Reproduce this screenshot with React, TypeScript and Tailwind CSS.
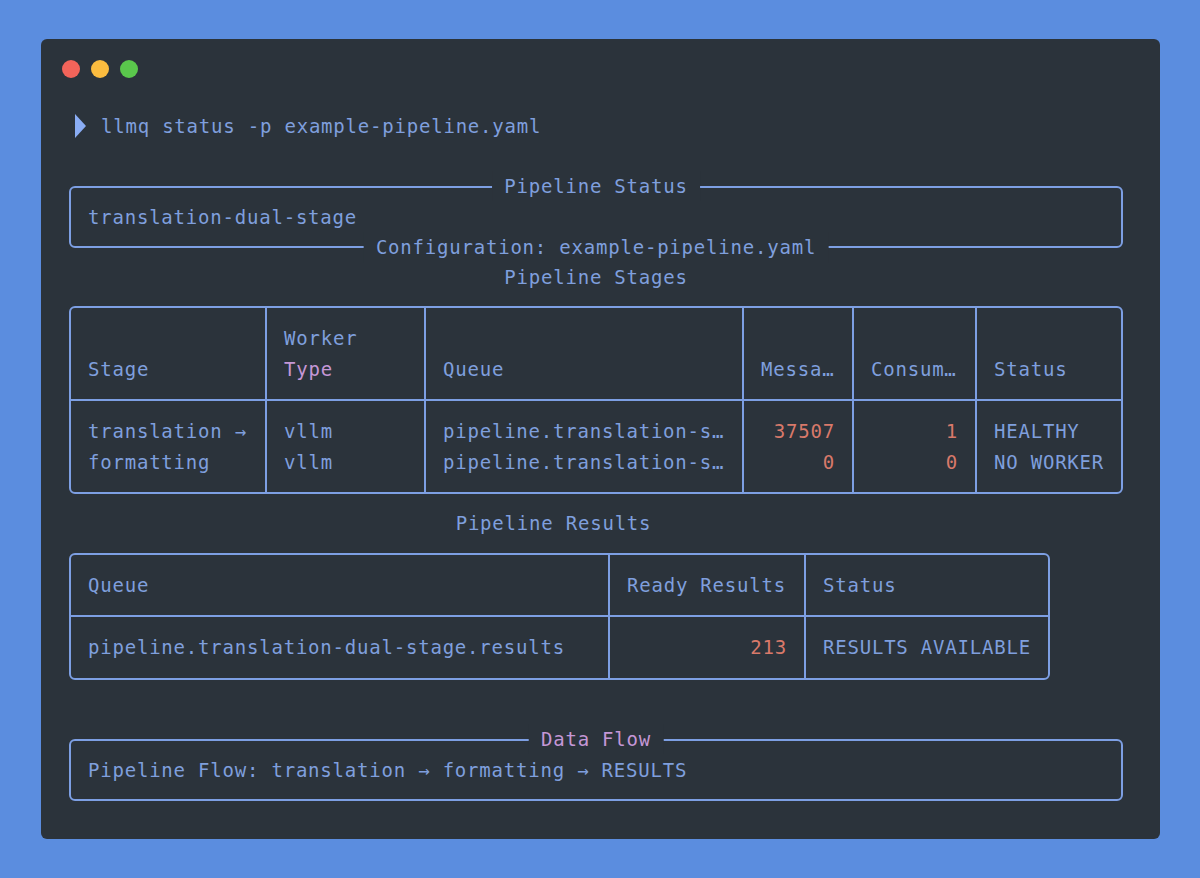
const mono = "font-['DejaVu_Sans_Mono',monospace] text-[19px] leading-[30.5px] tracking-[0.79px] text-[#7f9fdd]";
const line = 'border-2 border-[#7d9fe3]';

function Panel({
  title,
  titleClass,
  footer,
  children,
}: {
  title: string;
  titleClass?: string;
  footer?: string;
  children: React.ReactNode;
}) {
  return (
    <div className={`relative h-[62px] rounded-md px-[17px] py-[14.5px] ${line}`}>
      <span className={`absolute left-1/2 top-[-17px] -translate-x-1/2 whitespace-pre bg-[#2b333b] ${titleClass ?? ''}`}>
        {` ${title} `}
      </span>
      {children}
      {footer && (
        <span className="absolute bottom-[-17px] left-1/2 -translate-x-1/2 whitespace-pre bg-[#2b333b]">
          {` ${footer} `}
        </span>
      )}
    </div>
  );
}

function Cell({
  children,
  right,
  last,
  bottom,
}: {
  children: React.ReactNode;
  right?: boolean;
  last?: boolean;
  bottom?: boolean;
}) {
  return (
    <div
      className={`flex flex-col justify-end whitespace-pre px-[17px] py-[15px] ${
        right ? 'items-end text-[#d8796a]' : ''
      } ${last ? '' : 'border-r-2 border-[#7d9fe3]'} ${bottom ? 'border-b-2 border-[#7d9fe3]' : ''}`}
    >
      {children}
    </div>
  );
}

export default function App() {
  return (
    <div className="h-[878px] w-[1200px] overflow-hidden bg-[#5b8ddf] pl-[41px] pt-[39px]">
      <div className={`h-[800px] w-[1119px] rounded-md bg-[#2b333b] pl-[28px] pr-[37px] ${mono}`}>
        <div className="flex gap-[11px] pt-[21px] pl-[-7px] -ml-[7px]">
          <span className="h-[18px] w-[18px] rounded-full bg-[#f2645a]" />
          <span className="h-[18px] w-[18px] rounded-full bg-[#fbbc3f]" />
          <span className="h-[18px] w-[18px] rounded-full bg-[#5ac84c]" />
        </div>

        <div className="mt-[33px] flex items-center">
          <svg width="11" height="24" viewBox="0 0 11 24" className="ml-[6px] mr-[15px]">
            <path d="M0 0 L11 12 L0 24 Z" fill="#8aadf4" />
          </svg>
          <span>llmq status -p example-pipeline.yaml</span>
        </div>

        <div className="mt-[44px]">
          <Panel title="Pipeline Status" footer="Configuration: example-pipeline.yaml">
            translation-dual-stage
          </Panel>
        </div>

        <div className="mt-[14px] text-center">Pipeline Stages</div>

        <div className={`mt-[14px] grid grid-cols-[196px_159px_318px_110px_123px_1fr] rounded-md ${line}`}>
          <Cell bottom>Stage</Cell>
          <Cell bottom>
            <span>Worker</span>
            <span className="text-[#c597d6]">Type</span>
          </Cell>
          <Cell bottom>Queue</Cell>
          <Cell bottom>Messa…</Cell>
          <Cell bottom>Consum…</Cell>
          <Cell bottom last>Status</Cell>

          <Cell>
            <span>translation →</span>
            <span>formatting</span>
          </Cell>
          <Cell>
            <span>vllm</span>
            <span>vllm</span>
          </Cell>
          <Cell>
            <span>pipeline.translation-s…</span>
            <span>pipeline.translation-s…</span>
          </Cell>
          <Cell right>
            <span>37507</span>
            <span>0</span>
          </Cell>
          <Cell right>
            <span>1</span>
            <span>0</span>
          </Cell>
          <Cell last>
            <span>HEALTHY</span>
            <span>NO WORKER</span>
          </Cell>
        </div>

        <div className="mt-[14px] w-[981px] pr-[12px] text-center">Pipeline Results</div>

        <div className={`mt-[14px] grid w-[981px] grid-cols-[539px_196px_1fr] rounded-md ${line}`}>
          <Cell bottom>Queue</Cell>
          <Cell bottom>Ready Results</Cell>
          <Cell bottom last>Status</Cell>
          <Cell>pipeline.translation-dual-stage.results</Cell>
          <Cell right>213</Cell>
          <Cell last>RESULTS AVAILABLE</Cell>
        </div>

        <div className="mt-[59px]">
          <Panel title="Data Flow" titleClass="text-[#c597d6]">
            Pipeline Flow: translation → formatting → RESULTS
          </Panel>
        </div>
      </div>
    </div>
  );
}
